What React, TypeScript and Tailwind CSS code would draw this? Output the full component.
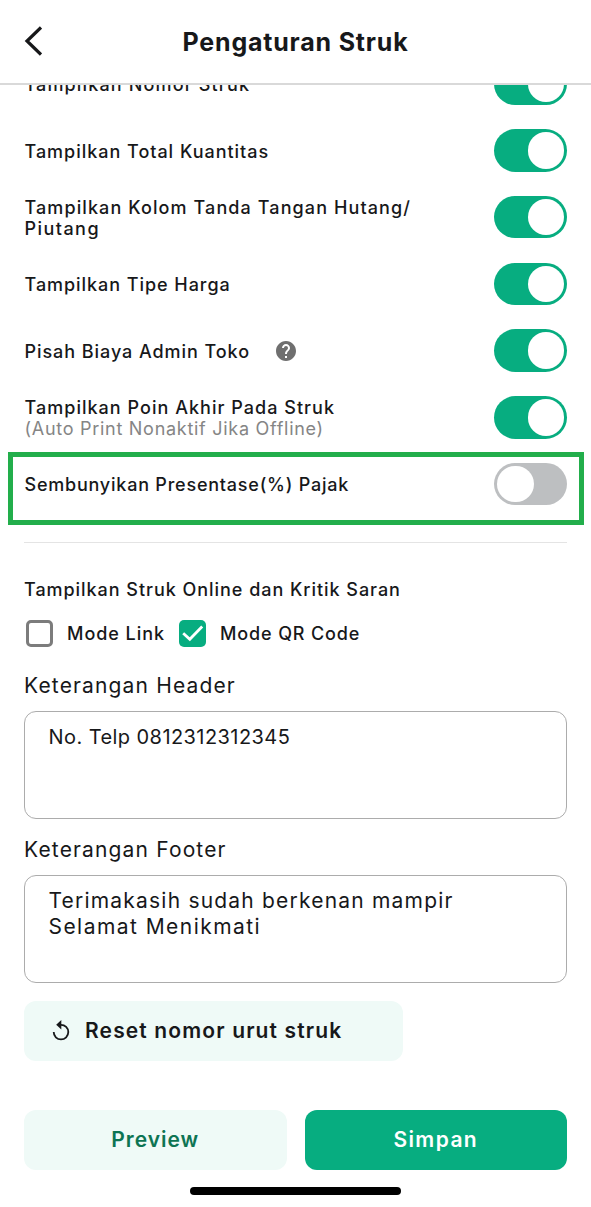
import { useState } from "react";
import { MdHelp } from "react-icons/md";
import clsx from "clsx";

type Line = { text: string; tracking: string };

type Setting = {
  id: string;
  label: Line[];
  note?: string;
  help?: boolean;
  highlight?: boolean;
};

const SETTINGS: Setting[] = [
  { id: "nomor", label: [{ text: "Tampilkan Nomor Struk", tracking: "tracking-[1.15px]" }] },
  { id: "kuantitas", label: [{ text: "Tampilkan Total Kuantitas", tracking: "tracking-[0.98px]" }] },
  {
    id: "ttd",
    label: [
      { text: "Tampilkan Kolom Tanda Tangan Hutang/", tracking: "tracking-[1.1px]" },
      { text: "Piutang", tracking: "tracking-[1.45px]" },
    ],
  },
  { id: "harga", label: [{ text: "Tampilkan Tipe Harga", tracking: "tracking-[0.95px]" }] },
  {
    id: "admin",
    label: [{ text: "Pisah Biaya Admin Toko", tracking: "tracking-[0.94px]" }],
    help: true,
  },
  {
    id: "poin",
    label: [{ text: "Tampilkan Poin Akhir Pada Struk", tracking: "tracking-[1.03px]" }],
    note: "(Auto Print Nonaktif Jika Offline)",
  },
  {
    id: "pajak",
    label: [{ text: "Sembunyikan Presentase(%) Pajak", tracking: "tracking-[0.78px]" }],
    highlight: true,
  },
];

function Toggle({ on, onClick }: { on: boolean; onClick: () => void }) {
  return (
    <button
      role="switch"
      aria-checked={on}
      onClick={onClick}
      className={clsx(
        "mb-px flex h-[42.5px] w-[73px] shrink-0 items-center rounded-full px-[3px]",
        on ? "justify-end bg-[#07ad80]" : "justify-start bg-[#bdbfc1]"
      )}
    >
      <span className="size-[36.5px] rounded-full bg-white" />
    </button>
  );
}

function Checkbox({ checked, onClick }: { checked: boolean; onClick: () => void }) {
  return (
    <button
      role="checkbox"
      aria-checked={checked}
      onClick={onClick}
      className={clsx(
        "flex size-[27px] shrink-0 items-center justify-center rounded-[5px]",
        checked ? "bg-[#07ad80]" : "border-3 border-[#7c7c7c]"
      )}
    >
      {checked && (
        <svg viewBox="0 0 27 27" className="size-[27px]" fill="none">
          <path d="M4.2 13.2 10.8 19.2 23.2 6.6" stroke="#fff" strokeWidth="2.8" />
        </svg>
      )}
    </button>
  );
}

function NoteBox({ id, title, tracking, lines }: {
  id: string;
  title: string;
  tracking: string;
  lines: Line[];
}) {
  return (
    <div className="pb-[18px]">
      <h3 id={id} className={clsx("text-[21px] leading-[26px]", tracking)}>
        {title}
      </h3>
      <div
        role="textbox"
        aria-labelledby={id}
        className="mt-3 h-[108px] rounded-xl border border-[#acacac] px-[23.5px] py-3 leading-[26px]"
      >
        {lines.map((l) => (
          <p key={l.text} className={clsx("whitespace-nowrap", l.tracking)}>
            {l.text}
          </p>
        ))}
      </div>
    </div>
  );
}

export default function App() {
  const [off, setOff] = useState<string[]>(["pajak"]);
  const [link, setLink] = useState(false);
  const [qr, setQr] = useState(true);

  const toggle = (id: string) =>
    setOff((prev) => (prev.includes(id) ? prev.filter((x) => x !== id) : [...prev, id]));

  return (
    <div className="flex h-[1207px] w-[591px] flex-col overflow-hidden bg-white font-['Inter',sans-serif] text-[#17181a]">
      {/* Header */}
      <header className="relative z-10 grid h-[85px] shrink-0 grid-cols-[1fr_auto_1fr] items-center border-b-2 border-[#d9d9d9] bg-white px-6">
        <button aria-label="Kembali" className="pb-0.5">
          <svg viewBox="0 0 18 30" className="h-[30px] w-[18px]" fill="none">
            <path d="M17 1.5 3 15 17 28.5" stroke="#17181a" strokeWidth="3.2" />
          </svg>
        </button>
        <h1 className="text-[25px] leading-[30px] font-bold tracking-[0.8px]">Pengaturan Struk</h1>
      </header>

      {/* Toggles */}
      <ul className="-mt-[34px] shrink-0">
        {SETTINGS.map((s) => (
          <li
            key={s.id}
            className="relative flex h-[66.7px] items-center justify-between pr-6 pl-[24.5px]"
          >
            <div className="flex items-center gap-[24px]">
              <div className="text-[18px] leading-[21px]">
                {s.label.map((l) => (
                  <p key={l.text} className={clsx("font-medium whitespace-nowrap", l.tracking)}>
                    {l.text}
                  </p>
                ))}
                {s.note && <p className="tracking-[0.72px] text-[#858585]">{s.note}</p>}
              </div>
              {s.help && <MdHelp className="size-6 text-[#6f6f6f]" />}
            </div>
            <Toggle on={!off.includes(s.id)} onClick={() => toggle(s.id)} />
            {s.highlight && (
              <div className="pointer-events-none absolute top-[1px] right-[7px] left-2 h-[73px] border-5 border-[#22ae4b]" />
            )}
          </li>
        ))}
      </ul>

      <section className="flex flex-col px-6">
        <hr className="mt-6 border-[#e4e4e4]" />
        <h2 className="mt-9 text-[18px] leading-[22px] font-medium tracking-[0.96px]">
          Tampilkan Struk Online dan Kritik Saran
        </h2>
        <div className="mt-[19px] flex h-[27px] items-center pl-0.5 text-[18px] font-medium">
          <Checkbox checked={link} onClick={() => setLink(!link)} />
          <span className="ml-[14px] w-[112px] tracking-[0.95px]">Mode Link</span>
          <Checkbox checked={qr} onClick={() => setQr(!qr)} />
          <span className="ml-[14px] tracking-[0.87px]">Mode QR Code</span>
        </div>

        <div className="mt-[26px]">
          <NoteBox
            id="header"
            title="Keterangan Header"
            tracking="tracking-[1.15px]"
            lines={[{ text: "No. Telp 0812312312345", tracking: "text-[20px] tracking-[0.43px]" }]}
          />
          <NoteBox
            id="footer"
            title="Keterangan Footer"
            tracking="tracking-[1.15px]"
            lines={[
              {
                text: "Terimakasih sudah berkenan mampir",
                tracking: "text-[21px] tracking-[1.2px]",
              },
              { text: "Selamat Menikmati", tracking: "text-[21px] tracking-[1.45px]" },
            ]}
          />
        </div>

        <button className="flex h-[60px] w-[379px] items-center rounded-xl bg-[#effaf7] pl-7 text-[21px] font-semibold tracking-[1.14px]">
          <svg viewBox="0 0 18 22" className="mr-[15px] h-[22px] w-[18px]" fill="none">
            <path d="M9 4.8A7.3 7.3 0 1 1 1.7 12.1" stroke="#17181a" strokeWidth="1.8" />
            <path d="M9.3 0v9.4L4.2 4.8z" fill="#17181a" />
          </svg>
          Reset nomor urut struk
        </button>

        {/* Footer actions */}
        <div className="mt-[49px] grid grid-cols-2 gap-[18px] text-[21px] font-semibold">
          <button className="h-[60px] rounded-xl bg-[#effaf7] tracking-[1px] text-[#0d7453]">
            Preview
          </button>
          <button className="h-[60px] rounded-xl bg-[#07ad80] tracking-[1.4px] text-white">
            Simpan
          </button>
        </div>
        <div className="mt-[17px] h-2 w-[211px] self-center rounded-full bg-black" />
      </section>
    </div>
  );
}
